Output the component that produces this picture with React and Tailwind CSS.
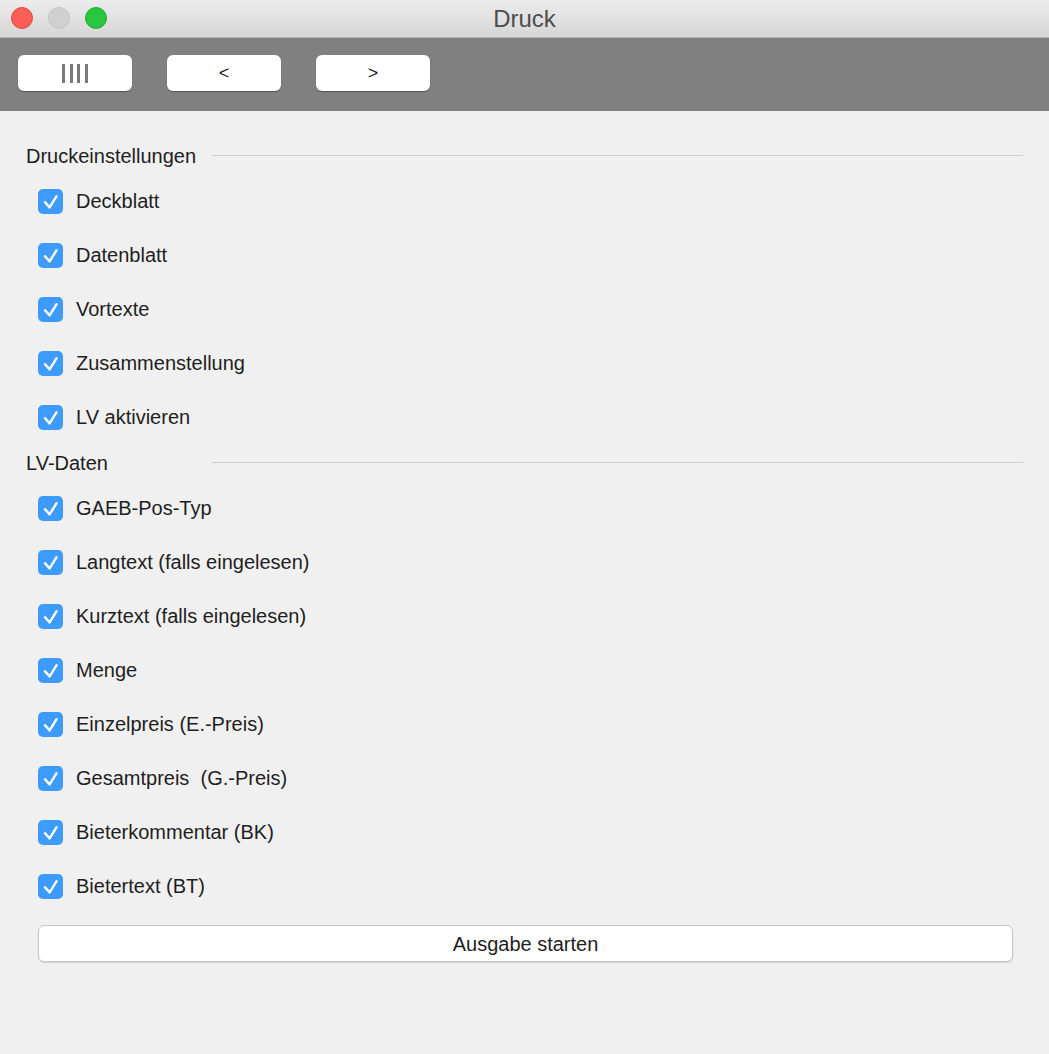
import React from "react";

const Check = () => (
  <span className="flex h-[25px] w-[25px] shrink-0 items-center justify-center rounded-[5px] bg-[#3c9bfd]">
    <svg width="25" height="25" viewBox="0 0 25 25" fill="none">
      <path d="M7 13.2 L11.6 18.4 L18.6 7.2" stroke="white" strokeWidth="2.4" strokeLinecap="round" strokeLinejoin="round" />
    </svg>
  </span>
);

const Row = ({ label }) => (
  <div className="flex h-[54px] items-center pl-[38px]">
    <Check />
    <span className="ml-[13px] text-[20px] text-[#1e1e1e] whitespace-pre">{label}</span>
  </div>
);

const Header = ({ label }) => (
  <div className="flex h-[37px] items-center pr-[26px]">
    <span className="w-[212px] shrink-0 pl-[26px] text-[20px] text-[#1e1e1e]">{label}</span>
    <div className="h-[2px] flex-1 border-t border-[#cfcfcf] border-b-white" />
  </div>
);

const TBtn = ({ children }) => (
  <div className="flex h-[36px] w-[114px] items-center justify-center rounded-[6px] bg-white shadow-[0_1px_1px_rgba(0,0,0,0.35)]">
    {children}
  </div>
);

export default function App() {
  const a = ["Deckblatt", "Datenblatt", "Vortexte", "Zusammenstellung", "LV aktivieren"];
  const b = [
    "GAEB-Pos-Typ",
    "Langtext (falls eingelesen)",
    "Kurztext (falls eingelesen)",
    "Menge",
    "Einzelpreis (E.-Preis)",
    "Gesamtpreis  (G.-Preis)",
    "Bieterkommentar (BK)",
    "Bietertext (BT)",
  ];
  return (
    <div className="flex h-[1054px] w-[1049px] flex-col bg-[#f0f0f0] font-['Liberation_Sans',Arial,sans-serif]">
      <div className="relative flex h-[38px] shrink-0 items-center justify-center border-b border-[#b4b4b4] bg-gradient-to-b from-[#ececec] to-[#d6d6d6]">
        <div className="absolute left-[11px] top-[7px] flex gap-[15px]">
          <span className="h-[22px] w-[22px] rounded-full border border-[#e2463f] bg-[#fc5f57]" />
          <span className="h-[22px] w-[22px] rounded-full border border-[#c4c4c4] bg-[#d0d0d0]" />
          <span className="h-[22px] w-[22px] rounded-full border border-[#1fa82f] bg-[#29c73f]" />
        </div>
        <span className="text-[24px] text-[#4d4d4d]">Druck</span>
      </div>
      <div className="flex h-[73px] shrink-0 items-start gap-[35px] bg-[#808080] pl-[18px] pt-[17px]">
        <TBtn>
          <span className="flex gap-[4.6px]">
            <span className="h-[19px] w-[3px] bg-[#7a7a7a]" />
            <span className="h-[19px] w-[3px] bg-[#7a7a7a]" />
            <span className="h-[19px] w-[3px] bg-[#7a7a7a]" />
            <span className="h-[19px] w-[3px] bg-[#7a7a7a]" />
          </span>
        </TBtn>
        <TBtn>
          <span className="text-[18px] text-[#222]">&lt;</span>
        </TBtn>
        <TBtn>
          <span className="text-[18px] text-[#222]">&gt;</span>
        </TBtn>
      </div>
      <div className="flex flex-col pt-[26px]">
        <Header label="Druckeinstellungen" />
        {a.map((l) => (
          <Row key={l} label={l} />
        ))}
        <Header label="LV-Daten" />
        {b.map((l) => (
          <Row key={l} label={l} />
        ))}
        <div className="ml-[38px] mr-[36px] mt-[12px] flex h-[37px] items-center justify-center rounded-[6px] border border-[#c6c6c6] bg-white shadow-[0_1px_1px_rgba(0,0,0,0.12)]">
          <span className="text-[20px] text-[#1e1e1e]">Ausgabe starten</span>
        </div>
      </div>
    </div>
  );
}
